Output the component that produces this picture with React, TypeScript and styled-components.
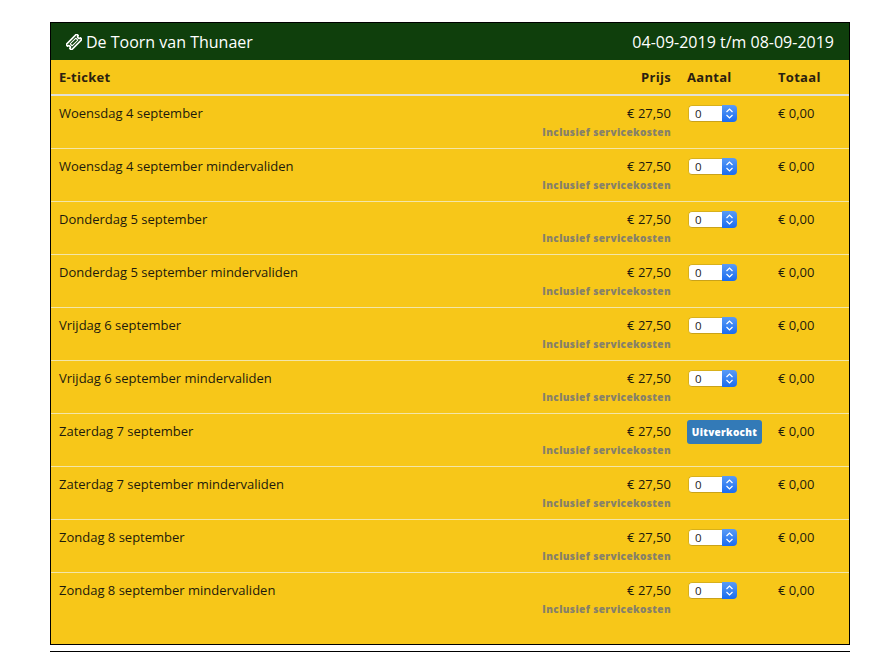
import styled, { createGlobalStyle } from "styled-components";

const tickets = [
    { name: "Woensdag 4 september" },
    { name: "Woensdag 4 september mindervaliden" },
    { name: "Donderdag 5 september" },
    { name: "Donderdag 5 september mindervaliden" },
    { name: "Vrijdag 6 september" },
    { name: "Vrijdag 6 september mindervaliden" },
    { name: "Zaterdag 7 september", soldOut: true },
    { name: "Zaterdag 7 september mindervaliden" },
    { name: "Zondag 8 september" },
    { name: "Zondag 8 september mindervaliden" },
];

const TicketIcon = () => (
    <svg width="16" height="16" viewBox="0 0 16 16" fill="none" stroke="#fff" strokeWidth="1.7" strokeLinejoin="round">
        <g transform="rotate(-45 8 8)">
            <path d="M0.5 4.2h15v2.2a1.6 1.6 0 0 0 0 3.2v2.2H0.5V9.6a1.6 1.6 0 0 0 0-3.2z" />
            <path d="M4 6.6h8v2.8H4z" strokeWidth="1" />
        </g>
    </svg>
);

const Chevrons = () => (
    <svg width="9" height="13" viewBox="0 0 9 13" fill="none" stroke="#fff" strokeWidth="1.2">
        <path d="M1.5 5 4.5 2 7.5 5" />
        <path d="M1.5 8 4.5 11 7.5 8" />
    </svg>
);

export default function App() {
    return (
        <Page>
            <GlobalStyle />
            <Panel>
                <Header>
                    <Title>
                        <TicketIcon />
                        De Toorn van Thunaer
                    </Title>
                    <span>04-09-2019 t/m 08-09-2019</span>
                </Header>
                <HeadRow>
                    <HeadCell>E-ticket</HeadCell>
                    <HeadPrice>Prijs</HeadPrice>
                    <HeadCell>Aantal</HeadCell>
                    <HeadCell>Totaal</HeadCell>
                </HeadRow>
                {tickets.map(t => (
                    <Row key={t.name}>
                        <Cell>{t.name}</Cell>
                        <PriceCell>
                            € 27,50
                            <Fee>Inclusief servicekosten</Fee>
                        </PriceCell>
                        <AmountCell>
                            {t.soldOut ? (
                                <SoldOut>Uitverkocht</SoldOut>
                            ) : (
                                <Select>
                                    <SelectValue>0</SelectValue>
                                    <SelectArrows><Chevrons /></SelectArrows>
                                </Select>
                            )}
                        </AmountCell>
                        <Cell>€ 0,00</Cell>
                    </Row>
                ))}
            </Panel>
            <Rule />
        </Page>
    );
}

const GlobalStyle = createGlobalStyle`
    body {
        margin: 0;
        background: #fff;
        font-family: "Open Sans", "Noto Sans", sans-serif;
        font-size: 13px;
        color: #1d1a0c;
    }
`

const Page = styled.div`
    padding: 22px 28px 0 50px;
    width: 800px;
`

const Panel = styled.div`
    background-color: #f7c719;
    border: 1px solid #000;
    height: 623px;
    box-sizing: border-box;
`

const Header = styled.div`
    align-items: center;
    background-color: #0f3f0c;
    color: #fff;
    display: flex;
    font-size: 16px;
    font-weight: 500;
    height: 37px;
    justify-content: space-between;
    padding: 0 15px;
`

const Title = styled.div`
    align-items: center;
    column-gap: 4px;
    display: flex;
`

const HeadRow = styled.div`
    border-bottom: 2px solid #e2e0d6;
    display: grid;
    font-weight: 700;
    grid-template-columns: 1fr 150px 91px 79px;
    height: 34px;
    line-height: 34px;
`

const HeadCell = styled.div`
    color: #2b2110;
    letter-spacing: 0.3px;
    padding-left: 8px;
`

const HeadPrice = styled(HeadCell)`
    padding: 0 8px 0 0;
    text-align: right;
`

const Row = styled.div`
    border-bottom: 1px solid #f3e6a8;
    box-sizing: border-box;
    display: grid;
    grid-template-columns: 1fr 150px 91px 79px;
    height: 53px;
    padding-top: 8px;

    &:last-child {
        border-bottom: 0;
    }
`

const Cell = styled.div`
    line-height: 19px;
    padding-left: 8px;
`

const PriceCell = styled.div`
    line-height: 19px;
    padding-right: 8px;
    text-align: right;
`

const Fee = styled.div`
    color: #86806a;
    font-size: 10px;
    font-weight: 800;
    letter-spacing: 0.4px;
    line-height: 19px;
    white-space: nowrap;
`

const AmountCell = styled.div`
    padding-left: 8px;
`

const Select = styled.div`
    border-radius: 4px;
    display: flex;
    height: 17px;
    margin: 1px 0 0 1px;
    overflow: hidden;
    width: 49px;
`

const SelectValue = styled.div`
    background-color: #fff;
    border-bottom: 1px solid #c9a21a;
    border-left: 1px solid #d8b01a;
    border-radius: 4px 0 0 4px;
    border-top: 1px solid #d8b01a;
    color: #222;
    flex: 1;
    font-size: 11.5px;
    line-height: 15px;
    padding-left: 6px;
`

const SelectArrows = styled.div`
    align-items: center;
    background: linear-gradient(#5a9bf6, #1a6cf0);
    display: flex;
    justify-content: center;
    width: 15px;
`

const SoldOut = styled.div`
    background-color: #337ab7;
    border-radius: 3px;
    color: #fff;
    font-size: 10px;
    font-weight: 800;
    height: 24px;
    letter-spacing: 0.3px;
    line-height: 24px;
    margin-top: -2px;
    text-align: center;
    width: 75px;
`

const Rule = styled.div`
    background-color: #000;
    height: 1px;
    margin-top: 6px;
`
